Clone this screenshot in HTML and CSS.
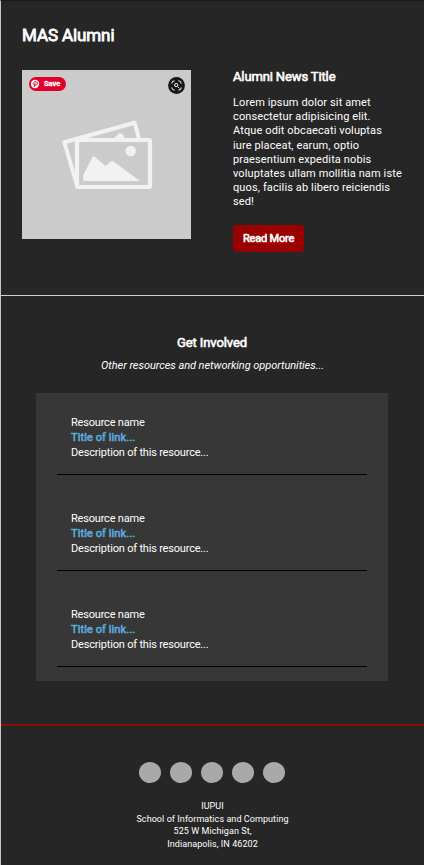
FILE: index.html
```html
<!DOCTYPE html>
<html lang="en">
<head>
<meta charset="utf-8">
<title>MAS Alumni</title>
<link rel="stylesheet" href="styles.css">
</head>
<body>
<main class="page">
  <section class="alumni">
    <h1 class="alumni-heading">MAS Alumni</h1>
    <div class="news">
      <div class="news-image">
        <svg class="placeholder" viewBox="0 0 169 169" aria-hidden="true">
          <path class="frame" d="M55.500 117L42.300 72.200L112.700 52.700L116.800 68"/>
          <path class="solid" d="M92 69Q93 66 95.500 65Q97 62 100 64Q102 65 102 69Z"/>
          <rect class="front" x="55" y="70" width="73" height="47" rx="1"/>
          <circle class="solid" cx="108.700" cy="81" r="5.200"/>
          <path class="solid" d="M61.300 111V105L70.500 87Q71.500 85.500 73 87L83.500 96L88.500 91.500Q90 90.500 91.500 91.500L118 111Z"/>
        </svg>
        <span class="save"><svg viewBox="0 0 12 12" aria-hidden="true"><circle cx="6" cy="6" r="4.200" fill="#fff"/><path d="M5 9L6.200 5M4.300 6.500C3.300 3.500 8.300 2.600 8.300 5.200C8.300 7.400 6.200 7.700 5.800 6.700" fill="none" stroke="#e60023" stroke-width="1"/></svg>Save</span>
        <svg class="lens" viewBox="0 0 18 18" aria-hidden="true"><circle cx="9" cy="9" r="8.900" fill="#171717"/><g fill="none" stroke="#fff"><path d="M4 7Q4 4 7 4M11 4Q14 4 14 7M14 11Q14 14 11 14M7 14Q4 14 4 11"/><circle cx="8.700" cy="8.500" r="1.700"/><path d="M10 10L12 12"/></g></svg>
      </div>
      <article class="news-copy">
        <h2 class="news-title">Alumni News Title</h2>
        <p class="news-text">Lorem ipsum dolor sit amet<br>consectetur adipisicing elit.<br>Atque odit obcaecati voluptas<br>iure placeat, earum, optio<br>praesentium expedita nobis<br>voluptates ullam mollitia nam iste<br>quos, facilis ab libero reiciendis<br>sed!</p>
        <a class="button">Read More</a>
      </article>
    </div>
  </section>
  <section class="involved">
    <h2 class="involved-title">Get Involved</h2>
    <p class="involved-sub">Other resources and networking opportunities...</p>
    <div class="resources">
      <div class="resource"><p>Resource name</p><a class="link">Title of link...</a><p>Description of this resource...</p></div>
      <div class="resource"><p>Resource name</p><a class="link">Title of link...</a><p>Description of this resource...</p></div>
      <div class="resource"><p>Resource name</p><a class="link">Title of link...</a><p>Description of this resource...</p></div>
    </div>
  </section>
  <footer class="footer">
    <div class="social"><i></i><i></i><i></i><i></i><i></i></div>
    <address class="address">IUPUI<br>School of Informatics and Computing<br>525 W Michigan St,<br>Indianapolis, IN 46202</address>
  </footer>
</main>
</body>
</html>
```
FILE: styles.css
```css
* { box-sizing: border-box; margin: 0; padding: 0; }
body { font-family: Roboto, sans-serif; font-size: 11px; color: #fff; background: #262626; }
.page { height: 865px; border-left: 1px solid #c4c8ca; border-top: 1px solid #17172b; overflow: hidden; }
h1, h2, .button, .link { font-weight: 400; -webkit-text-stroke: .6px currentColor; }
.alumni { height: 295px; padding: 24px 0 0 21px; border-bottom: 1px solid #d0d0d0; }
.alumni-heading { font-size: 17px; line-height: 20px; letter-spacing: -.1px; -webkit-text-stroke-width: .8px; }
.news { display: grid; grid-template-columns: 169px 1fr; column-gap: 42px; margin-top: 25px; }
.news-image { position: relative; height: 169px; background: #cbcbcb; }
.placeholder { display: block; width: 169px; height: 169px; }
.save { position: absolute; left: 7px; top: 7px; width: 37px; height: 14px; padding-bottom: 1px; border-radius: 7px; background: #e00027; display: flex; align-items: center; gap: 3px; font-size: 7.5px; font-weight: 700; -webkit-text-stroke: .3px #fff; }
.save svg { width: 12px; height: 12px; margin-top: 1px; }
.lens { position: absolute; left: 146px; top: 7px; width: 17px; height: 17px; }
.news-title { font-size: 13px; line-height: 14px; letter-spacing: -.13px; }
.news-text { margin-top: 12px; line-height: 14.2px; letter-spacing: .12px; }
.button { display: flex; align-items: center; justify-content: center; width: 71px; height: 27px; margin-top: 15px; border-radius: 4px; background: #900; letter-spacing: -.2px; }
.involved { height: 430px; padding: 39px 36px 0 35px; border-bottom: 2px solid #8d0e0a; }
.involved-title { font-size: 13px; line-height: 16px; letter-spacing: -.1px; text-align: center; }
.involved-sub { margin-top: 8px; padding-left: 1px; line-height: 14px; letter-spacing: -.06px; font-style: italic; text-align: center; }
.resources { height: 288px; margin-top: 20px; padding: 0 21px; background: #373737; }
.resource { height: 82px; padding: 22px 14px 0; line-height: 15px; letter-spacing: -.19px; border-bottom: 1px solid #000; }
.resource + .resource { height: 96px; padding-top: 36px; }
.link { display: block; color: #5aa9dc; letter-spacing: .1px; }
.footer { padding: 36px 2px 0 0; }
.social { display: flex; justify-content: center; gap: 9px; }
.social i { width: 22px; height: 21px; border-radius: 50%; background: #a8a9ab; }
.address { margin-top: 17px; padding-left: 2px; font-size: 9px; font-style: normal; line-height: 12.6px; letter-spacing: .07px; text-align: center; }
.frame { fill: none; stroke: #f2f2f2; stroke-width: 4; stroke-linejoin: round; }
.solid { fill: #f2f2f2; }
.front { fill: #cbcbcb; stroke: #f2f2f2; stroke-width: 4.2; }
```
